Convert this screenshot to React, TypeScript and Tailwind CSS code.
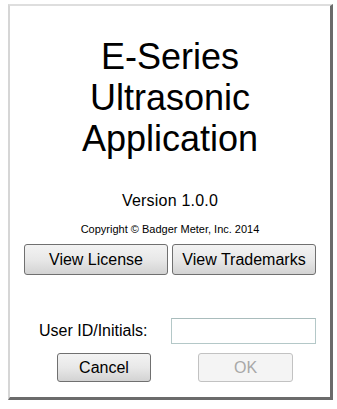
export default function App() {
  return (
    <div className="w-[337px] h-[409px] bg-white pt-[4px] pl-[8px] font-['Liberation_Sans',Arial,sans-serif] text-black">
      <div className="w-[325px] h-[396px] border-t-2 border-l-2 border-t-[#dedede] border-l-[#d6d6d6] border-r-[3px] border-b-[3px] border-r-[#6b6b6b] border-b-[#6b6b6b] bg-white flex flex-col">
        {/* Title */}
        <div className="pt-[30px] text-center text-[36px] leading-[41px]">
          <div>E-Series</div>
          <div>Ultrasonic</div>
          <div>Application</div>
        </div>

        <div className="mt-[32px] text-center text-[16px] leading-[20px] tracking-[0.2px]">Version 1.0.0</div>
        <div className="mt-[11px] text-center text-[11px] leading-[14px]">
          Copyright © Badger Meter, Inc. 2014
        </div>

        {/* View buttons */}
        <div className="mt-[8px] pl-[14px] flex gap-[4px]">
          <button
            type="button"
            className="w-[144px] h-[31px] rounded-[3px] border border-[#707070] bg-linear-to-b from-[#f3f3f3] via-[#e8e8e8] to-[#d3d3d3] text-[16px]"
          >
            View License
          </button>
          <button
            type="button"
            className="w-[144px] h-[31px] rounded-[3px] border border-[#707070] bg-linear-to-b from-[#f3f3f3] via-[#e8e8e8] to-[#d3d3d3] text-[16px]"
          >
            View Trademarks
          </button>
        </div>

        {/* User ID */}
        <div className="mt-[43px] flex items-center">
          <label className="ml-[29px] w-[132px] text-[16px] leading-[20px]">User ID/Initials:</label>
          <input
            type="text"
            className="w-[145px] h-[26px] border border-[#b4c8c8] border-t-[#a9bcbc] bg-white outline-none px-1 text-[14px]"
          />
        </div>

        {/* Cancel / OK */}
        <div className="mt-[9px] flex">
          <button
            type="button"
            className="ml-[47px] w-[94px] h-[29px] rounded-[3px] border border-[#707070] bg-linear-to-b from-[#f3f3f3] via-[#e8e8e8] to-[#d3d3d3] text-[16px]"
          >
            Cancel
          </button>
          <button
            type="button"
            disabled
            className="ml-[47px] w-[95px] h-[29px] rounded-[3px] border border-[#c2c2c2] bg-[#f4f4f4] text-[16px] text-[#a8a8a8]"
          >
            OK
          </button>
        </div>
      </div>
    </div>
  );
}
